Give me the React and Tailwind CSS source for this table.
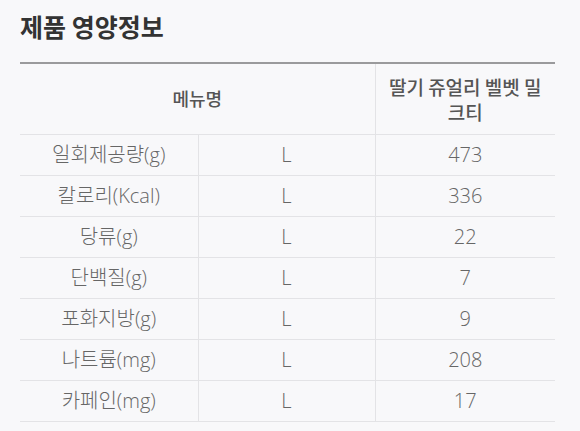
const rows = [
  { name: '일회제공량(g)', size: 'L', value: '473' },
  { name: '칼로리(Kcal)', size: 'L', value: '336' },
  { name: '당류(g)', size: 'L', value: '22' },
  { name: '단백질(g)', size: 'L', value: '7' },
  { name: '포화지방(g)', size: 'L', value: '9' },
  { name: '나트륨(mg)', size: 'L', value: '208' },
  { name: '카페인(mg)', size: 'L', value: '17' },
];

export default function App() {
  return (
    <div
      className="min-h-[431px] bg-[#f8f8fa] px-5 pt-[10px]"
      style={{ fontFamily: '"Noto Sans CJK KR", "Noto Sans", sans-serif' }}
    >
      <h2 className="text-[25px] font-bold text-[#333] leading-8">제품 영양정보</h2>

      <table className="mt-[20px] w-[535px] table-fixed border-collapse border-t-2 border-[#9a9a9c] text-center">
        <colgroup>
          <col className="w-[178px]" />
          <col className="w-[177px]" />
          <col />
        </colgroup>
        <thead>
          <tr className="h-[71px] border-b border-[#e3e3e6]">
            <th colSpan={2} className="font-medium text-[18px] text-[#555] border-r border-[#e3e3e6]">
              메뉴명
            </th>
            <th className="font-medium text-[19px] leading-[25px] text-[#555] px-3">
              딸기 쥬얼리 벨벳 밀크티
            </th>
          </tr>
        </thead>
        <tbody>
          {rows.map(row => (
            <tr
              key={row.name}
              className="h-[41px] border-b border-[#e3e3e6] text-[20px] font-light text-[#666]"
              style={{ fontFamily: '"Open Sans", "Noto Sans CJK KR", sans-serif' }}
            >
              <td className="border-r border-[#e3e3e6]">{row.name}</td>
              <td className="border-r border-[#e3e3e6]">{row.size}</td>
              <td>{row.value}</td>
            </tr>
          ))}
        </tbody>
      </table>
    </div>
  );
}
